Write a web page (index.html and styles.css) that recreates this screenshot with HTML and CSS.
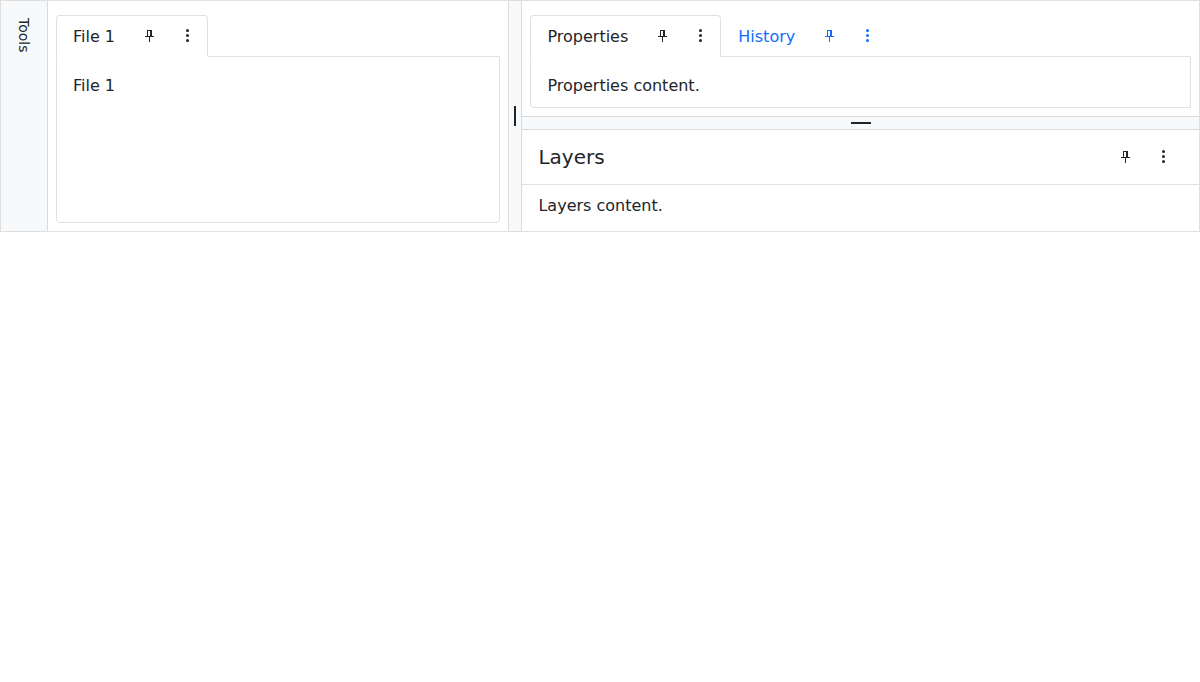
FILE: index.html
```
<!DOCTYPE html>
<html lang="en">
<head>
<meta charset="utf-8">
<title>Dock Manager</title>
<link rel="stylesheet" href="styles.css">
</head>
<body>
<svg class="sprite" aria-hidden="true">
  <symbol id="pin" viewBox="0 0 16 16"><path fill-rule="evenodd" d="M6 2h5v6h2v1H9v5H8V9H4V8h2zM7 3v5h2V3z"/></symbol>
  <symbol id="more" viewBox="0 0 16 16"><circle cx="8.5" cy="2.5" r="1.5"/><circle cx="8.5" cy="7.5" r="1.5"/><circle cx="8.5" cy="12.5" r="1.5"/></symbol>
</svg>
<div class="dock">
  <aside class="rail"><span class="rail-item">Tools</span></aside>
  <section class="pane files">
    <div class="tabs">
      <div class="tab active"><span class="label">File 1</span><span class="actions"><svg class="icon"><use href="#pin"/></svg><svg class="icon"><use href="#more"/></svg></span></div>
    </div>
    <div class="content">File 1</div>
  </section>
  <div class="bar vertical"><i class="handle"></i></div>
  <div class="column">
    <section class="pane props">
      <div class="tabs">
        <div class="tab active"><span class="label">Properties</span><span class="actions"><svg class="icon"><use href="#pin"/></svg><svg class="icon"><use href="#more"/></svg></span></div>
        <div class="tab"><span class="label">History</span><span class="actions"><svg class="icon"><use href="#pin"/></svg><svg class="icon"><use href="#more"/></svg></span></div>
      </div>
      <div class="content">Properties content.</div>
    </section>
    <div class="bar horizontal"><i class="handle"></i></div>
    <section class="layers">
      <header class="layers-head"><span>Layers</span><span class="actions"><svg class="icon"><use href="#pin"/></svg><svg class="icon"><use href="#more"/></svg></span></header>
      <div class="layers-body">Layers content.</div>
    </section>
  </div>
</div>
</body>
</html>
```

FILE: styles.css
```
* { box-sizing: border-box; }
body { margin: 0; background: #fff; color: #212529; font: 16px/24px "DejaVu Sans", sans-serif; }
.sprite { position: absolute; width: 0; height: 0; }
.dock { display: flex; height: 232px; border: 1px solid #dfdfe0; }
.rail { width: 47px; flex: none; padding: 17px 12px; background: #f8f9fa; border-right: 1px solid #d9dadb; }
.rail-item { display: block; writing-mode: vertical-rl; font-size: 14px; line-height: 21px; }
.pane { display: flex; flex-direction: column; padding: 14px 8px 8px; }
.files { width: 460px; flex: none; }
.column { flex: 1; min-width: 0; display: flex; flex-direction: column; }
.props { height: 115px; flex: none; }
.tabs { display: flex; height: 42px; flex: none; margin-bottom: -1px; }
.tab { display: flex; align-items: center; padding: 0 12px 0 16px; border: 1px solid transparent; color: #0d6efd; }
.label { padding-top: 2px; }
.props .label { padding-left: .45px; margin-right: -.45px; }
.active { position: relative; color: #212529; background: #fff; border-color: #e0e0e1; border-bottom-color: #fff; border-radius: 4px 4px 0 0; }
.actions { display: flex; gap: 22px; margin-left: 26px; }
.icon { display: block; width: 16px; height: 16px; fill: currentColor; }
.content { flex: 1; padding: 17px 16px 0; border: 1px solid #e0e0e1; border-radius: 0 0 4px 4px; }
.props .content { padding-left: 16.45px; border-bottom-right-radius: 0; }
.bar { display: flex; flex: none; align-items: center; justify-content: center; background: #f8f9fa; border: 0 solid #d9dadb; }
.vertical { width: 14px; border-width: 0 1px; }
.horizontal { height: 14px; border-width: 1px 0; }
.handle { background: #212529; }
.vertical .handle { width: 2px; height: 20px; }
.horizontal .handle { width: 20px; height: 2px; }
.layers { flex: 1; }
.layers-head { display: flex; align-items: center; justify-content: space-between; height: 55px; padding: 0 28px 0 16.45px; border-bottom: 1px solid #e0e0e1; font-size: 20px; }
.layers-body { padding: 9px 16.45px; }
```
